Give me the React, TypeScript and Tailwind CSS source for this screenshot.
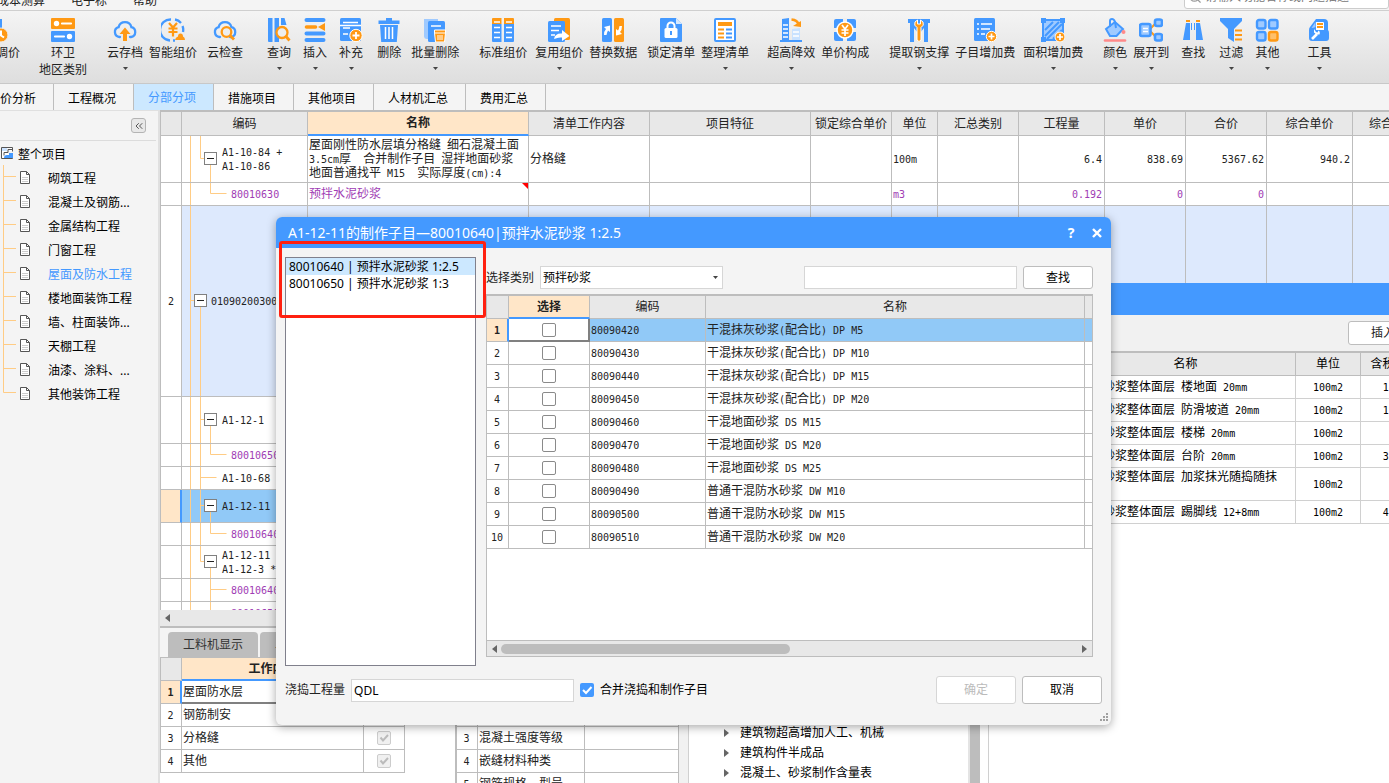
import type { ReactNode } from "react";
import { ChevronsLeft, Search } from "lucide-react";

const B = "#4499ff";
const O = "#ff9914";
const L = "#9fcaff";

/* Icon artwork, all on a 24x24 canvas */
const YUAN = "M9 7l3 4 3-4M12 11v7M8.5 12h7M8.5 15h7";
const CLOUD = "M7 19H6.5A5 5 0 0 1 5.6 9.2 6.6 6.6 0 0 1 18.4 9.2 5 5 0 0 1 18 19h-1";

const icons: Record<string, ReactNode> = {
  price: (
    <>
      <path d="M2 1h16v21H2z" fill={B} />
      <circle cx="17" cy="17" r="7" fill={O} stroke="#eee" strokeWidth="1" />
      <path d="M17 12.500v5l3 2" stroke="#fff" strokeWidth="2" fill="none" />
    </>
  ),
  sanitation: (
    <>
      <rect width="24" height="11" rx="1" fill={O} />
      <rect y="13" width="24" height="11" rx="1" fill={B} />
      <circle cx="5.5" cy="5.5" r="2.7" fill="#fff" />
      <path d="M11 5.5h9M4 18.5h9" stroke="#fff" strokeWidth="2.2" strokeLinecap="round" />
      <circle cx="18.5" cy="18.5" r="2.7" fill="#fff" />
    </>
  ),
  archive: (
    <>
      <path d={CLOUD} stroke={B} strokeWidth="2.3" fill="none" strokeLinecap="round" />
      <path d="M12 9.5l5.5 6.5H14v7h-4v-7H6.5z" fill={O} />
    </>
  ),
  smart: (
    <>
      <path d="M10 1.500A10.500 10.500 0 0 0 9 22.500M14 1.500A10.500 10.500 0 0 1 20 5M21.500 8A10.500 10.500 0 0 1 22 14M12 22.500h2" stroke={B} strokeWidth="2.300" fill="none" />
      <path d="M8 5l4 4.500 4-4.500M12 9.500v9M7.500 10.500h9M7.500 14h9" stroke={O} strokeWidth="2.200" fill="none" />
      <path d="M14 22q.5-3 3-3.500 0-3 2.500-3t2.500 3q2 .5 2 3.500z" fill={O} />
    </>
  ),
  cloudCheck: (
    <>
      <path d={CLOUD} stroke={B} strokeWidth="2.3" fill="none" strokeLinecap="round" />
      <circle cx="13.5" cy="14" r="4.8" fill="#eee" stroke={O} strokeWidth="2.3" />
      <path d="M17 17.500l4 4" stroke={O} strokeWidth="2.800" />
    </>
  ),
  query: (
    <>
      <path d="M1 0h4.500v24H2a1 1 0 0 1-1-1zM7.500 0H12v24H7.500zM14 0h3.500l2 7H14z" fill={B} />
      <circle cx="15" cy="14.5" r="5.5" fill="#eee" stroke={O} strokeWidth="2.300" />
      <path d="M19 18.500l3.500 4" stroke={O} strokeWidth="2.800" />
    </>
  ),
  insert: (
    <>
      <path d="M3.500 2h17M3.500 15.500h17M3.500 22h17" stroke={B} strokeWidth="4" strokeLinecap="round" />
      <path d="M3.500 9h9" stroke={O} strokeWidth="3.600" strokeLinecap="round" />
      <path d="M15 9l7-4v8z" fill={O} />
    </>
  ),
  supplement: (
    <>
      <rect x="1" width="21" height="23" rx="1.500" fill={B} />
      <path d="M4 4.500h15M4 10h7M4 16h5M1 7.500h21" stroke="#fff" strokeWidth="1.600" />
      <circle cx="17" cy="17.500" r="6.200" fill={O} stroke="#fff" strokeWidth="1" />
      <path d="M17 14v7M13.500 17.500h7" stroke="#fff" strokeWidth="1.800" />
    </>
  ),
  remove: (
    <>
      <path d="M9 0h6v2.500h7.500v3.500H1.500V2.500H9z" fill={B} />
      <path d="M3 7h18l-1.200 17H4.200z" fill={B} />
      <path d="M8.500 9v12M12 9v12M15.500 9v12" stroke="#fff" strokeWidth="1.500" />
    </>
  ),
  batchRemove: (
    <>
      <path d="M1 1h14v20H4a3 3 0 0 1-3-3z" fill={L} />
      <rect x="5" y="3" width="17" height="21" rx="1.500" fill={B} />
      <path d="M8 8h10" stroke="#fff" strokeWidth="1.500" />
      <path d="M11.500 12h11v3l-1 9h-9l-1-9z" fill={O} stroke="#fff" strokeWidth="1" />
      <path d="M15 17v5M17 17v5M19 17v5M12 15h10" stroke="#fff" strokeWidth="1" />
    </>
  ),
  standard: (
    <>
      <path d="M1 1a1 1 0 0 1 1-1h8.500v6H1zM13 0h9a1 1 0 0 1 1 1v5H13z" fill={O} />
      <path d="M1 6h9.500v18H2a1 1 0 0 1-1-1zM13 6h10v17a1 1 0 0 1-1 1h-9z" fill={B} />
      <path d="M3 4h6M15 4h6M3 9.500h6M15 9.500h6M3 14.500h6M15 14.500h6M3 19.500h6M15 19.500h6" stroke="#fff" strokeWidth="1.500" />
    </>
  ),
  reuse: (
    <>
      <rect x="7" width="16" height="22" rx="1.500" fill={O} />
      <rect x="1" y="3" width="17" height="21" rx="1.500" fill={B} />
      <path d="M4 8h10M4 12.500h8M4 17h4" stroke="#fff" strokeWidth="1.700" />
      <path d="M7 21q1-6 8-5.500V12l7.500 6-7.500 5v-3.500q-4-.5-8 1.500z" fill="#fff" />
    </>
  ),
  replace: (
    <>
      <rect x="1" width="10" height="24" rx="1.500" fill={B} />
      <rect x="13" width="10" height="24" rx="1.500" fill={O} />
      <path d="M3 17q0-4 2-6L3 9l6-1.500V14l-2-1.500Q6 14 5.500 17zM21 8q0 4-2 6l2 2-6 1.500V11l2 1.500Q18 11 18.500 8z" fill="#fff" />
    </>
  ),
  lock: (
    <>
      <path d="M1 1a1 1 0 0 1 1-1h15l6 6v17a1 1 0 0 1-1 1H2a1 1 0 0 1-1-1z" fill={B} />
      <path d="M17 0l6 6h-6z" fill="#d6e9ff" />
      <rect x="5.500" y="10" width="13" height="10" rx="1.500" fill="#fff" />
      <path d="M8.500 10V8a3.500 3.500 0 0 1 7 0v2" stroke="#fff" strokeWidth="2" fill="none" />
      <path d="M12 13v4" stroke={B} strokeWidth="2" />
    </>
  ),
  arrange: (
    <>
      <rect x="2" y="1" width="20" height="22" rx="1" fill="#fff" stroke={B} strokeWidth="2" />
      <path d="M5 6h14" stroke={O} strokeWidth="4" />
      <path d="M5 11.500h6M5 15.500h6M5 19.500h6" stroke={O} strokeWidth="1.800" />
      <path d="M13 11.500h6M13 15.500h6M13 19.500h6" stroke={B} strokeWidth="1.800" />
    </>
  ),
  highrise: (
    <>
      <path d="M3 1l7-1v22H3z" fill={B} />
      <path d="M13 11l8-1v12h-8z" fill="#c9e2ff" />
      <path d="M1 23h22" stroke={B} strokeWidth="2" />
      <path d="M4 7h5M4 11h5M4 15h5M4 19h5M14 14h6M14 18h6" stroke="#fff" strokeWidth="1.500" />
      <path d="M12.500 1.500q6 .5 7 5" stroke={O} strokeWidth="2.500" fill="none" />
      <path d="M14 8l8-5v6z" fill={O} />
    </>
  ),
  composition: (
    <>
      <rect x="1" y="1" width="22" height="22" rx="2" fill={B} />
      <path d="M12 0v24M0 12h24" stroke="#eee" strokeWidth="4" />
      <circle cx="12" cy="12" r="8" fill={O} stroke="#fff" strokeWidth="1.500" />
      <path d={YUAN} stroke="#fff" strokeWidth="1.700" fill="none" />
    </>
  ),
  support: (
    <>
      <path d="M1 1h22v4h-2v19h-4V10l-4 5h-2L7 10v14H3V5H1z" fill={B} />
      <path d="M10 9.500Q6.500 7.500 8 4l2.500-2v4h3V2L16 4q1.500 3.500-2 5.500V22q-2 3-4 0z" fill={O} stroke="#fff" strokeWidth="1" />
    </>
  ),
  subFee: (
    <>
      <rect x="1" width="21" height="23" rx="1.500" fill={B} />
      <path d="M8 6h11M8 11h9M8 16h4M4 6h2M4 11h2M4 16h2" stroke="#fff" strokeWidth="1.700" />
      <circle cx="18.500" cy="18.500" r="5.200" fill={O} stroke="#fff" strokeWidth="1" />
      <path d="M18.500 15.500v6M15.500 18.500h6" stroke="#fff" strokeWidth="1.700" />
    </>
  ),
  areaFee: (
    <>
      <rect x="2" y="2" width="20" height="20" fill={L} stroke={B} strokeWidth="2" />
      <path d="M4 12l8-8M4 18L18 4M6 21L21 6M12 21l9-9" stroke={B} strokeWidth="2" />
      <path d="M0 0h5v5H0zM19 0h5v5h-5zM0 19h5v5H0z" fill={B} />
      <circle cx="19" cy="19" r="5" fill={O} stroke="#fff" strokeWidth="1" />
      <path d="M19 16v6M16 19h6" stroke="#fff" strokeWidth="1.700" />
    </>
  ),
  color: (
    <>
      <path d="M3 11l9-7 8 7-6.500 7H7z" fill={L} stroke={B} strokeWidth="2" />
      <path d="M7 9V3q0-2 2-2t3 3l1 6" stroke={B} strokeWidth="2" fill="none" />
      <circle cx="20.500" cy="14" r="2" fill="#ff8a8a" />
      <path d="M2 22.500h20" stroke="#ff8a8a" strokeWidth="2.600" strokeLinecap="round" />
    </>
  ),
  expand: (
    <>
      <path d="M10 12l7-7M10 12l7 7" stroke={O} strokeWidth="2" />
      <rect x="1" y="6" width="10.500" height="12" rx="2" fill={L} stroke={B} strokeWidth="2.600" />
      <path d="M4 10.500h5M4 13.500h5" stroke="#fff" strokeWidth="1.500" />
      <rect x="16" y="1.500" width="7" height="6.500" rx="2" fill={L} stroke={B} strokeWidth="2.600" />
      <rect x="16" y="16" width="7" height="6.500" rx="2" fill={L} stroke={B} strokeWidth="2.600" />
    </>
  ),
  find: (
    <>
      <path d="M5 2h4v2H5zM15 2h4v2h-4z" fill={O} />
      <path d="M5 5h4v17H2zM15 5h4l3 17h-7z" fill={B} />
      <path d="M10 5h1v7h-1zM13 5h1v7h-1z" fill={B} />
    </>
  ),
  filter: (
    <>
      <path d="M1 0h22v3l-8 8v13l-6-4V11L1 3z" fill={B} />
      <path d="M16 12.500h7M16 17h7M16 21.500h7" stroke={O} strokeWidth="2.200" />
    </>
  ),
  other: (
    <>
      <rect x="2" y="2" width="8.500" height="8.500" rx="2" fill={L} stroke={B} strokeWidth="2.400" />
      <rect x="14" y="2" width="8.500" height="8.500" rx="2" fill={L} stroke={B} strokeWidth="2.400" />
      <rect x="2" y="14" width="8.500" height="8.500" rx="2" fill={L} stroke={B} strokeWidth="2.400" />
      <rect x="14" y="14" width="8.500" height="8.500" rx="2" fill="#ffc06a" stroke={O} strokeWidth="2.400" />
    </>
  ),
  tools: (
    <>
      <path d="M2 12q0-2 1-3l6-8h8q4 0 4 4v7q1 1 1 3v5q0 3-3 3H5q-3 0-3-3z" fill={B} />
      <path d="M4.500 10l4-6v5q-2 1-4 1z" fill={L} />
      <path d="M9 4h7q1 0 1 1v7H9z" fill="#fff" />
      <path d="M10 6h6M10 9h6" stroke={O} strokeWidth="1.800" />
      <path d="M5 21l5-5" stroke="#fff" strokeWidth="2.600" />
      <path d="M7 11v3.500l2.500 2h3q1-3-1-4l-1 2-1.500-.5z" fill="#fff" />
    </>
  ),
};

const ribbon: { icon: string; label: string; sub?: string; menu?: boolean; gap: string }[] = [
  { icon: "price", label: "统一调价", gap: "-ml-7" },
  { icon: "sanitation", label: "环卫", sub: "地区类别", gap: "ml-[19px]" },
  { icon: "archive", label: "云存档", menu: true, gap: "ml-5" },
  { icon: "smart", label: "智能组价", gap: "ml-1.5" },
  { icon: "cloudCheck", label: "云检查", gap: "ml-2.5" },
  { icon: "query", label: "查询", menu: true, gap: "ml-6" },
  { icon: "insert", label: "插入", menu: true, gap: "ml-3" },
  { icon: "supplement", label: "补充", menu: true, gap: "ml-3" },
  { icon: "remove", label: "删除", gap: "ml-3.5" },
  { icon: "batchRemove", label: "批量删除", menu: true, gap: "ml-2.5" },
  { icon: "standard", label: "标准组价", gap: "ml-5" },
  { icon: "reuse", label: "复用组价", menu: true, gap: "ml-2" },
  { icon: "replace", label: "替换数据", gap: "ml-1.5" },
  { icon: "lock", label: "锁定清单", gap: "ml-2.5" },
  { icon: "arrange", label: "整理清单", menu: true, gap: "ml-1.5" },
  { icon: "highrise", label: "超高降效", menu: true, gap: "ml-4.5" },
  { icon: "composition", label: "单价构成", gap: "ml-1.5" },
  { icon: "support", label: "提取钢支撑", menu: true, gap: "ml-5" },
  { icon: "subFee", label: "子目增加费", gap: "ml-1.5" },
  { icon: "areaFee", label: "面积增加费", menu: true, gap: "ml-2" },
  { icon: "color", label: "颜色", menu: true, gap: "ml-5" },
  { icon: "expand", label: "展开到", menu: true, gap: "ml-1.5" },
  { icon: "find", label: "查找", gap: "ml-3" },
  { icon: "filter", label: "过滤", menu: true, gap: "ml-3.5" },
  { icon: "other", label: "其他", menu: true, gap: "ml-3" },
  { icon: "tools", label: "工具", menu: true, gap: "ml-7" },
];

const tabs = ["造价分析", "工程概况", "分部分项", "措施项目", "其他项目", "人材机汇总", "费用汇总"];

const projects = [
  "砌筑工程",
  "混凝土及钢筋...",
  "金属结构工程",
  "门窗工程",
  "屋面及防水工程",
  "楼地面装饰工程",
  "墙、柱面装饰...",
  "天棚工程",
  "油漆、涂料、...",
  "其他装饰工程",
];

const headers = ["", "编码", "名称", "清单工作内容", "项目特征", "锁定综合单价", "单位", "汇总类别", "工程量", "单价", "合价", "综合单价", "综合合价"];

type Tree = "item" | "itemLast" | "leaf" | "list" | "child" | "childMore";

type Row = {
  no?: string;
  code: string;
  tree: Tree;
  h: number;
  cells?: string[];
  purple?: boolean;
  tone?: "list" | "selected";
};

const rows: Row[] = [
  {
    code: "A1-10-84 +\nA1-10-86",
    tree: "itemLast",
    h: 47,
    cells: ["屋面刚性防水层填分格缝 细石混凝土面\n3.5cm厚  合并制作子目 湿拌地面砂浆\n地面普通找平 M15  实际厚度(cm):4", "分格缝", "", "", "100m", "", "6.4", "838.69", "5367.62", "940.2", ""],
  },
  { code: "80010630", tree: "child", h: 23, purple: true, cells: ["预拌水泥砂浆", "", "", "", "m3", "", "0.192", "0", "0", "", ""] },
  { no: "2", code: "010902003001", tree: "list", h: 191, tone: "list" },
  { code: "A1-12-1", tree: "item", h: 47 },
  { code: "80010650", tree: "child", h: 23, purple: true },
  { code: "A1-10-68", tree: "leaf", h: 23 },
  { code: "A1-12-11", tree: "item", h: 33, tone: "selected" },
  { code: "80010640", tree: "child", h: 23, purple: true },
  { code: "A1-12-11\nA1-12-3 *", tree: "itemLast", h: 33 },
  { code: "80010640", tree: "childMore", h: 23, purple: true },
  { code: "80010650", tree: "child", h: 23, purple: true },
];

const materials = [
  ["80090420", "干混抹灰砂浆(配合比) DP M5"],
  ["80090430", "干混抹灰砂浆(配合比) DP M10"],
  ["80090440", "干混抹灰砂浆(配合比) DP M15"],
  ["80090450", "干混抹灰砂浆(配合比) DP M20"],
  ["80090460", "干混地面砂浆 DS M15"],
  ["80090470", "干混地面砂浆 DS M20"],
  ["80090480", "干混地面砂浆 DS M25"],
  ["80090490", "普通干混防水砂浆 DW M10"],
  ["80090500", "普通干混防水砂浆 DW M15"],
  ["80090510", "普通干混防水砂浆 DW M20"],
];

const quotas = [
  ["楼地面 20mm", "1822.27"],
  ["防滑坡道 20mm", "1946.31"],
  ["楼梯 20mm", "882.27"],
  ["台阶 20mm", "3120.54"],
  ["加浆抹光随捣随抹", "764.18"],
  ["踢脚线 12+8mm", "4385.06"],
];

// Latin runs sit in a half-width mono face, CJK stays full width
function Grid({ text }: { text: string }) {
  return (
    <span className="whitespace-pre">
      {text.split(/([\x20-\x7e]+)/).map((part, i) =>
        i % 2 ? (
          <span key={i} className="font-['DejaVu_Sans_Mono',monospace] text-[10px] leading-none">{part}</span>
        ) : (
          part
        )
      )}
    </span>
  );
}

function Caret() {
  return (
    <svg className="h-[3px] w-[5px]" viewBox="0 0 5 3">
      <path d="M0 0h5L2.500 3z" fill="#444" />
    </svg>
  );
}

function Arrow({ left }: { left?: boolean }) {
  return (
    <svg className="h-2 w-[5px] shrink-0" viewBox="0 0 5 8">
      <path d={left ? "M5 0v8L0 4z" : "M0 0v8l5-4z"} fill="#666" />
    </svg>
  );
}

function TreeLines({ kind, h, first }: { kind: Tree; h: number; first: boolean }) {
  const mid = Math.floor(h / 2) - 0.5;
  const isItem = kind === "item" || kind === "itemLast";
  const isChild = kind === "child" || kind === "childMore";
  const afterLast = isChild && first;
  const width = kind === "list" ? 29 : isChild ? 49 : 40;
  let d = `M8.5 0V${h}`;
  if (kind === "list") d += `M8.5 ${mid}h5M18.5 ${mid}V${h}`;
  if (kind === "item") d += `M18.5 0V${h}M18.5 ${mid}h5M28.5 ${mid}V${h}`;
  if (kind === "itemLast") d += `M18.5 0V${mid}h5M28.5 ${mid}V${h}`;
  if (kind === "leaf") d += `M18.5 0V${h}M18.5 ${mid}h16`;
  if (isChild) d += `M28.5 0V${kind === "child" ? mid : h}M28.5 ${mid}h16`;
  if (isChild && !afterLast) d += `M18.5 0V${h}`;
  const box = kind === "list" ? 12.5 : 22.5;
  return (
    <svg width={width} height={h} className="block shrink-0">
      <path d={d} stroke="#ffcc85" fill="none" />
      {(isItem || kind === "list") && (
        <>
          <rect x={box} y={mid - 6} width="12" height="12" fill="#fff" stroke="#808080" />
          <path d={`M${box + 2.5} ${mid}h7`} stroke="#222" />
        </>
      )}
    </svg>
  );
}

function MainTable() {
  const th = "h-6 border-r border-b border-[#bdbdbd] bg-[#e8e8e8] p-0 font-normal";
  return (
    <table className="w-[1273px] table-fixed border-separate border-spacing-0">
      <colgroup>
        <col className="w-[21px]" />
        <col className="w-[126px]" />
        <col className="w-[221px]" />
        <col className="w-[121px]" />
        <col className="w-[161px]" />
        <col className="w-[81px]" />
        <col className="w-[46px]" />
        <col className="w-[81px]" />
        <col className="w-[86px]" />
        <col className="w-[81px]" />
        <col className="w-[81px]" />
        <col className="w-[86px]" />
        <col className="w-[81px]" />
      </colgroup>
      <thead>
        <tr>
          {headers.map((h) => (
            <th
              key={h}
              className={h === "名称" ? "h-6 border-r border-b-2 border-r-[#bdbdbd] border-b-[#4499ff] bg-[#ffe6c8] p-0 font-bold" : th}
            >
              {h}
            </th>
          ))}
        </tr>
      </thead>
      <tbody>
        {rows.map((row, i) => {
          const bg = row.tone === "list" ? "bg-[#dde9fd]" : row.tone === "selected" ? "bg-[#91c9f7]" : "bg-white";
          const td = `border-r border-b border-[#bdbdbd] ${bg}`;
          return (
            <tr key={i} className={row.purple ? "text-[#a03cb4]" : ""}>
              <td
                className={
                  row.tone === "selected"
                    ? "border-r-2 border-b border-r-[#4499ff] border-b-[#bdbdbd] bg-[#ffe6c8] p-0"
                    : "border-r border-b border-[#bdbdbd] bg-white p-0 text-center"
                }
              >
                {row.no && <Grid text={row.no} />}
              </td>
              <td className={`${td} overflow-hidden p-0`}>
                <div className="flex items-center leading-[14px]">
                  <TreeLines kind={row.tree} h={row.h - 1} first={i === 1 || i > 8} />
                  <Grid text={row.code} />
                </div>
              </td>
              {Array.from({ length: 11 }, (_, c) => (
                <td key={c} className={`${td} relative py-0 pr-[2px] pl-px leading-[14px] ${c > 5 ? "text-right" : ""}`}>
                  <Grid text={row.cells?.[c] ?? ""} />
                  {i === 1 && c === 0 && (
                    <svg className="absolute top-0 right-0 size-[6px]" viewBox="0 0 6 6">
                      <path d="M0 0h6v6z" fill="#f00" />
                    </svg>
                  )}
                </td>
              ))}
            </tr>
          );
        })}
      </tbody>
    </table>
  );
}

function BottomPanel() {
  const td = "h-[23px] border-r border-b border-[#bdbdbd] bg-white py-0 pr-[2px] pl-px";
  const th = "h-[23px] border-r border-b border-[#bdbdbd] bg-[#e8e8e8] p-0 font-normal";
  const features = ["防水层做法", "厚度", "混凝土强度等级", "嵌缝材料种类", "钢筋规格、型号"];
  return (
    <div className="flex h-[157px] shrink-0 flex-col overflow-hidden border-t-2 border-[#bdbdbd]">
      <div className="flex h-[29px] shrink-0 items-end gap-[2px] pl-2 text-[#333]">
        <button className="h-[25px] rounded-t-sm bg-[#bdbdbd] px-[15px]">工料机显示</button>
        <button className="h-[25px] rounded-t-sm bg-[#bdbdbd] px-[15px]">单价构成</button>
      </div>
      <div className="flex min-h-0 flex-1 bg-white">
        <div className="w-[295px] shrink-0">
          <table className="w-[245px] table-fixed border-separate border-spacing-0 border-t border-l border-[#bdbdbd]">
            <colgroup>
              <col className="w-[21px]" />
              <col />
              <col className="w-[41px]" />
            </colgroup>
            <thead>
              <tr>
                <th className={th} />
                <th className="border-r border-b-2 border-r-[#bdbdbd] border-b-[#4499ff] bg-[#ffe6c8] p-0 font-bold">工作内容</th>
                <th className={th}>输出</th>
              </tr>
            </thead>
            <tbody>
              {["屋面防水层", "钢筋制安", "分格缝", "其他"].map((name, i) => (
                <tr key={name}>
                  <td
                    className={
                      i === 0
                        ? "h-[23px] border-r-2 border-b border-r-[#4499ff] border-b-[#bdbdbd] bg-[#ffe6c8] p-0 text-center font-bold"
                        : `${td} text-center`
                    }
                  >
                    <Grid text={String(i + 1)} />
                  </td>
                  <td className={i === 0 ? "h-[23px] border-r border-b-2 border-r-[#bdbdbd] border-b-[#808080] py-0 pr-[2px] pl-px" : td}>{name}</td>
                  <td className={td}>
                    <span className="relative mx-auto block size-[14px]">
                      <input
                        type="checkbox"
                        checked
                        disabled
                        readOnly
                        aria-label={name}
                        className="block size-[14px] appearance-none rounded-[2px] border border-[#ccc] bg-[#f0f0f0]"
                      />
                      <svg className="absolute inset-0 size-[14px]" viewBox="0 0 14 14">
                        <path d="M3.500 6.500l2.500 3 5-5.500" stroke="#bbb" strokeWidth="2" fill="none" />
                      </svg>
                    </span>
                  </td>
                </tr>
              ))}
            </tbody>
          </table>
        </div>
        <div className="flex w-[234px] shrink-0 items-start border-r border-[#d0d0d0] bg-[#f1f1f1]">
          <table className="w-[224px] table-fixed border-separate border-spacing-0 border-t border-l-2 border-[#bdbdbd]">
            <colgroup>
              <col className="w-[21px]" />
              <col className="w-[107px]" />
              <col />
            </colgroup>
            <thead>
              <tr>
                <th className={th} />
                <th className={th}>特征</th>
                <th className={th}>特征值</th>
              </tr>
            </thead>
            <tbody>
              {features.map((name, i) => (
                <tr key={name}>
                  <td className={`${td} text-center`}><Grid text={String(i + 1)} /></td>
                  <td className={td}>{name}</td>
                  <td className={td} />
                </tr>
              ))}
            </tbody>
          </table>
        </div>
        <ul className="flex-1 pt-[66px] pl-[35px] text-black">
          {["建筑物超高增加人工、机械", "建筑构件半成品", "混凝土、砂浆制作含量表"].map((t) => (
            <li key={t} className="flex h-5 items-center gap-[11px] whitespace-nowrap">
              <Arrow />
              {t}
            </li>
          ))}
        </ul>
        <div className="w-[421px] shrink-0 border-l-2 border-[#e4e4e4]">
          <div className="h-full w-[10px] bg-[#bdbdbd]" />
        </div>
      </div>
    </div>
  );
}

// Quota picker, half covered by the material dialog
function QuotaWindow() {
  const td = "border-r border-b border-[#d0d0d0] px-[3px] py-0 leading-[14px]";
  return (
    <div className="absolute top-[283px] right-0 bottom-0 left-[988px] flex flex-col overflow-hidden border-l border-[#d0d0d0] bg-[#f1f1f1]">
      <div className="h-8 shrink-0 bg-[#4499ff]" />
      <div className="flex h-9 shrink-0 items-center pl-[359px]">
        <button className="h-6 w-[70px] shrink-0 rounded-[3px] border border-[#bdbdbd] bg-white">插入</button>
      </div>
      <div className="flex-1 bg-white text-black">
        <table className="w-[440px] table-fixed border-separate border-spacing-0 border-t-2 border-[#bdbdbd]">
          <colgroup>
            <col className="w-[87px]" />
            <col className="w-[220px]" />
            <col className="w-[65px]" />
            <col className="w-[68px]" />
          </colgroup>
          <thead>
            <tr>
              {["编码", "名称", "单位", "含税单价"].map((h) => (
                <th key={h} className="h-[23px] border-r border-b border-[#bdbdbd] bg-[#e8e8e8] p-0 font-normal">{h}</th>
              ))}
            </tr>
          </thead>
          <tbody>
            {quotas.map(([name, price], i) => (
              <tr key={name} className={i === 4 ? "h-[33px]" : "h-[23px]"}>
                <td className={td}><Grid text={`A1-12-${i + 9}`} /></td>
                <td className={i === 4 ? `${td} pt-[2px] align-top` : td}><Grid text={`水泥砂浆整体面层 ${name}`} /></td>
                <td className={`${td} text-center`}><Grid text="100m2" /></td>
                <td className={`${td} text-right`}><Grid text={price} /></td>
              </tr>
            ))}
          </tbody>
        </table>
      </div>
    </div>
  );
}

function MaterialDialog() {
  const td = "h-[23px] border-r border-b border-[#bdbdbd] py-0 pr-[2px] pl-px";
  const th = "h-[23px] border-r border-b border-[#bdbdbd] bg-[#e8e8e8] p-0 font-normal";
  return (
    <div
      role="dialog"
      aria-label="制作子目"
      className="absolute top-[217px] left-[276px] flex h-[508px] w-[835px] flex-col rounded-md bg-[#f4f4f4] shadow-[0_2px_10px_rgba(0,0,0,0.35)]"
    >
      <div className="flex h-[31px] shrink-0 items-center justify-between rounded-t-md bg-[#4499ff] pr-2 pl-3 text-white">
        <h2 className="text-sm">A1-12-11的制作子目—80010640|预拌水泥砂浆 1:2.5</h2>
        <div className="flex items-center gap-3">
          <button aria-label="帮助" className="w-4 text-sm font-bold">?</button>
          <button aria-label="关闭" className="flex size-3">
            <svg className="size-3" viewBox="0 0 12 12">
              <path d="M2 2l8 8M10 2l-8 8" stroke="#fff" strokeWidth="2.400" />
            </svg>
          </button>
        </div>
      </div>
      <div className="flex min-h-0 flex-1 gap-[10px] pt-[9px] pr-[18px] pl-[9px]">
        <ul className="w-[191px] border border-[#80808c] bg-white text-black">
          <li className="h-[17px] bg-[#cce8ff] px-[3px] leading-[17px]">80010640 | 预拌水泥砂浆 1:2.5</li>
          <li className="h-[17px] px-[3px] leading-[17px]">80010650 | 预拌水泥砂浆 1:3</li>
        </ul>
        <div className="flex flex-1 flex-col pt-[9px] pb-[9px]">
          <div className="flex h-[23px] items-center">
            <label htmlFor="kind" className="mr-[6px]">选择类别</label>
            <div className="relative h-full w-[183px]">
              <select id="kind" className="h-full w-full appearance-none border border-[#d6d6d6] bg-white px-[2px] text-black">
                <option>预拌砂浆</option>
              </select>
              <span className="pointer-events-none absolute inset-y-0 right-[5px] flex items-center">
                <Caret />
              </span>
            </div>
            <input aria-label="查找内容" className="ml-auto h-full w-[213px] border border-[#d6d6d6] bg-white px-1" />
            <button className="ml-[6px] h-full w-[70px] rounded-[3px] border border-[#bdbdbd] bg-white text-black">查找</button>
          </div>
          <div className="mt-[5px] flex min-h-0 flex-1 flex-col border border-t-2 border-[#bdbdbd] bg-white">
            <table className="w-full table-fixed border-separate border-spacing-0">
              <colgroup>
                <col className="w-[22px]" />
                <col className="w-[81px]" />
                <col className="w-[116px]" />
                <col />
                <col className="w-[7px]" />
              </colgroup>
              <thead>
                <tr>
                  <th className={th} />
                  <th className="border-r border-b-2 border-r-[#bdbdbd] border-b-[#4499ff] bg-[#ffe6c8] p-0 font-bold">选择</th>
                  <th className={th}>编码</th>
                  <th className={th}>名称</th>
                  <th className="border-b border-[#bdbdbd] bg-[#e8e8e8] p-0" />
                </tr>
              </thead>
              <tbody>
                {materials.map(([code, name], i) => {
                  const on = i === 0;
                  return (
                    <tr key={code} className={on ? "bg-[#91c9f7]" : "bg-white"}>
                      <td
                        className={
                          on
                            ? "h-[23px] border-r-2 border-b border-r-[#4499ff] border-b-[#bdbdbd] bg-[#ffe6c8] p-0 text-center font-bold"
                            : `${td} text-center`
                        }
                      >
                        <Grid text={String(i + 1)} />
                      </td>
                      <td className={on ? "h-[23px] border-r-2 border-b-2 border-[#808080] bg-white p-0" : td}>
                        <input
                          type="checkbox"
                          aria-label={code}
                          className="mx-auto block size-[14px] appearance-none rounded-[2px] border border-[#8a8a8a] bg-white"
                        />
                      </td>
                      <td className={td}><Grid text={code} /></td>
                      <td className={td}><Grid text={name} /></td>
                      <td className="border-b border-[#bdbdbd] p-0" />
                    </tr>
                  );
                })}
              </tbody>
            </table>
            <div className="mt-auto flex h-4 items-center border-t border-[#bdbdbd] bg-[#e8e8e8] px-[5px]">
              <Arrow left />
              <div className="mx-1 flex-1">
                <div className="h-[10px] w-1/2 rounded-full bg-[#bdbdbd]" />
              </div>
              <Arrow />
            </div>
          </div>
        </div>
      </div>
      <div className="mb-[11px] flex h-12 shrink-0 items-center px-[9px]">
        <label htmlFor="qty" className="mr-[6px]">浇捣工程量</label>
        <input id="qty" defaultValue="QDL" className="h-[23px] w-[223px] border border-[#d6d6d6] bg-white px-[2px] text-black" />
        <label className="ml-[6px] flex items-center gap-[6px] text-black">
          <span className="relative block size-[14px]">
            <input type="checkbox" defaultChecked className="block size-[14px] appearance-none rounded-[2px] bg-[#4499ff]" />
            <svg className="pointer-events-none absolute inset-0 size-[14px]" viewBox="0 0 14 14">
              <path d="M3 7l3 3 5.500-6" stroke="#fff" strokeWidth="2" fill="none" />
            </svg>
          </span>
          合并浇捣和制作子目
        </label>
        <button disabled className="ml-auto h-7 w-20 rounded-[3px] border border-[#d6d6d6] bg-white text-[#bbb]">确定</button>
        <button className="ml-[6px] h-7 w-20 rounded-[3px] border border-[#bdbdbd] bg-white text-black">取消</button>
      </div>
      <svg className="absolute right-[3px] bottom-1 size-2" viewBox="0 0 8 8" fill="#a0a0a0">
        <path d="M6 0h2v2H6zM3 3h2v2H3zM6 3h2v2H6zM0 6h2v2H0zM3 6h2v2H3zM6 6h2v2H6z" />
      </svg>
      {/* Highlight frame round the sub-item list */}
      <div className="pointer-events-none absolute top-6 left-[3px] h-[77px] w-[207px] rounded-[3px] border-3 border-[#ff2010]" />
    </div>
  );
}

export default function App() {
  return (
    <div className="relative flex h-screen flex-col overflow-hidden bg-[#f4f4f4] font-['Noto_Sans','Noto_Sans_CJK_SC',sans-serif] text-xs text-[#222]">
      {/* Menu bar */}
      <nav className="flex h-[11px] shrink-0 items-end border-b border-[#cfcfcf] pb-px leading-4">
        <a href="#cost" className="-ml-[3px]">成本测算</a>
        <a href="#bid" className="ml-[26px]">电子标</a>
        <a href="#help" className="ml-[26px]">帮助</a>
        <div className="ml-auto flex h-6 w-[205px] shrink-0 items-center gap-[3px] rounded-[3px] border border-[#ccc] bg-white pl-[3px]">
          <Search className="size-[14px] shrink-0 text-[#999]" />
          <input aria-label="搜索" placeholder="请输入功能名称或问题描述" className="h-4 min-w-0 flex-1 placeholder:text-[#777]" />
        </div>
      </nav>

      {/* Ribbon */}
      <div className="flex h-[73px] shrink-0 items-start border-b border-[#c8c8c8] bg-linear-to-b from-[#f4f4f4] to-[#dedede] pt-[7px]">
        {ribbon.map((r) => (
          <button key={r.icon} className={`flex shrink-0 flex-col items-center ${r.gap}`}>
            <svg className="size-6" viewBox="0 0 24 24">{icons[r.icon]}</svg>
            <span className="mt-[2px] leading-[17px] whitespace-nowrap">{r.label}</span>
            {r.sub && <span className="leading-[17px] whitespace-nowrap">{r.sub}</span>}
            {r.menu && (
              <span className="mt-[6px] leading-none">
                <Caret />
              </span>
            )}
          </button>
        ))}
      </div>

      {/* Page tabs */}
      <div className="flex h-[26px] shrink-0">
        {tabs.map((t, i) => (
          <button
            key={t}
            className={`shrink-0 border-r border-[#bdbdbd] pr-[17px] pl-[14px] whitespace-nowrap ${t === "人材机汇总" ? "w-23" : "w-20"} ${
              i === 0 ? "-ml-[26px]" : ""
            } ${t === "分部分项" ? "bg-[#cce8ff] pt-px text-[#4499ff]" : "pt-[3px] text-black"}`}
          >
            {t}
          </button>
        ))}
      </div>

      <div className="flex min-h-0 flex-1">
        {/* Project tree */}
        <aside className="w-40 shrink-0 border-t border-r-2 border-[#e0e0e0]">
          <div className="mr-[2px] flex h-[30px] items-center justify-end border-b border-[#dcdcdc] pr-[10px]">
            <button aria-label="收起" className="flex size-[15px] items-center justify-center rounded-[3px] border border-[#b4b4b4] bg-[#e8e8e8]">
              <ChevronsLeft className="size-3 text-[#555]" />
            </button>
          </div>
          <div className="flex h-6 items-center gap-1 text-black">
            <svg className="size-[14px]" viewBox="0 0 14 14">
              <path d="M1.500 1.500h11v4M12.500 11v1.500h-11v-11" fill="#fff" stroke="#555" />
              <path d="M2 2h5v3H2z" fill="#cce3ff" />
              <path d="M4 9.500V6.500h4v-3h4" stroke="#555" fill="none" />
              <path d="M4 12q0-3 3-3h2V7h4v5z" fill={B} />
            </svg>
            <span className="pt-[3px]">整个项目</span>
          </div>
          <ul>
            {projects.map((p, i) => (
              <li key={p} className="flex h-6 items-center pl-[3px]">
                <svg width="13" height="24" className="shrink-0">
                  <path d={i === projects.length - 1 ? "M.5 0v11.500h13" : "M.5 0v24M.5 11.500h13"} stroke="#ffcc85" fill="none" />
                </svg>
                <svg className="mr-[18px] ml-1 h-[13px] w-[10px] shrink-0" viewBox="0 0 10 13">
                  <path d="M.5.5h6l3 3v9h-9z" fill="#fff" stroke="#555" />
                  <path d="M6.500.5v3h3" fill="none" stroke="#555" />
                  <path d="M2 6.500h6M2 8.500h6M2 10.500h6" stroke="#ccc" />
                </svg>
                <a href={`#p${i}`} className={`pt-[3px] ${p === "屋面及防水工程" ? "text-[#4499ff]" : "text-black"}`}>{p}</a>
              </li>
            ))}
          </ul>
        </aside>

        <main className="flex min-w-0 flex-1 flex-col border-t-2 border-[#bdbdbd]">
          <div className="min-h-0 flex-1 overflow-hidden border-l border-[#bdbdbd] bg-white">
            <MainTable />
          </div>
          <div className="flex h-4 shrink-0 items-center bg-[#e8e8e8] pl-[5px]">
            <Arrow left />
          </div>
          <BottomPanel />
        </main>
      </div>

      <QuotaWindow />
      <MaterialDialog />
    </div>
  );
}
